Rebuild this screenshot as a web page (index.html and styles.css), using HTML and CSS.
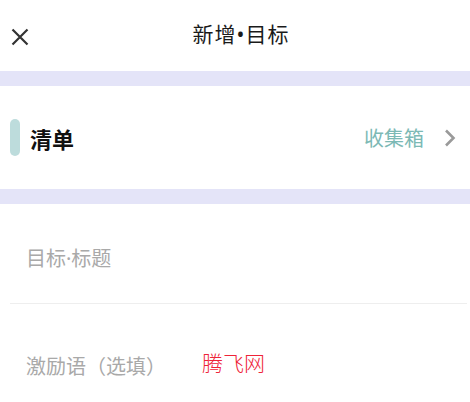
FILE: index.html
```html
<!DOCTYPE html>
<html lang="zh-CN">
<head>
  <meta charset="UTF-8" />
  <meta name="viewport" content="width=device-width, initial-scale=1.0" />
  <title>新增目标</title>
  <link rel="stylesheet" href="styles.css">
</head>
<body>

  <!-- 顶部栏 -->
  <div class="header">
    <svg class="close" width="18" height="18" viewBox="0 0 18 18">
      <path d="M1.5 1.5 L16.5 16.5 M16.5 1.5 L1.5 16.5" stroke="#333" stroke-width="2.2" fill="none" />
    </svg>
    <div class="title">新增•目标</div>
  </div>

  <div class="gap"></div>

  <!-- 清单 -->
  <div class="list-row">
    <span class="bar"></span>
    <span class="list-name">清单</span>
    <span class="list-value">收集箱</span>
    <svg class="arrow" width="12" height="18" viewBox="0 0 12 18">
      <path d="M2 1.5 L9.5 9 L2 16.5" stroke="#9a9a9a" stroke-width="2.6" fill="none" />
    </svg>
  </div>

  <div class="gap"></div>

  <!-- 输入 -->
  <div class="form">
    <input class="field field-title" type="text" placeholder="目标·标题">
    <div class="divider"></div>
    <input class="field field-motto" type="text" placeholder="激励语（选填）">
    <div class="watermark">腾飞网</div>
  </div>

</body>
</html>
```

FILE: styles.css
```css
body {
  margin: 0;
  background: #fff;
  font-family: "Noto Sans CJK SC", "Noto Sans", sans-serif;
  color: #222;
}

.header {
  display: flex;
  align-items: center;
  height: 71px;
  padding-left: 11px;
}

.close {
  margin-top: 3px;
  flex-shrink: 0;
}

.title {
  flex: 1;
  text-align: center;
  font-family: "Noto Sans", "Noto Sans CJK SC", sans-serif;
  font-size: 21px;
  letter-spacing: 1px;
  line-height: 30px;
  margin-right: 17px;
  margin-top: -3px;
  color: #1a1a1a;
}

.gap {
  height: 15px;
  background: #e4e4f8;
}

.list-row {
  display: flex;
  align-items: center;
  height: 103px;
  padding: 0 14px 0 10px;
}

.bar {
  width: 10px;
  height: 37px;
  border-radius: 5px;
  background: #bddcdc;
}

.list-name {
  margin-left: 10px;
  font-size: 22px;
  font-weight: bold;
  color: #111;
  flex: 1;
}

.list-value {
  font-size: 20px;
  color: #7cb9b5;
  margin-right: 20px;
}

.form {
  position: relative;
  padding-top: 40px;
}

.field {
  display: block;
  box-sizing: border-box;
  width: 100%;
  height: 30px;
  padding: 0 26px;
  border: none;
  outline: none;
  background: transparent;
  font-family: "Noto Sans", "Noto Sans CJK SC", sans-serif;
  font-size: 20px;
  line-height: 30px;
  color: #333;
}

.field::placeholder {
  color: #a9a9a9;
}

.field-title {
  margin-bottom: 29px;
}

.field-motto {
  margin-top: 48px;
}

.divider {
  height: 1px;
  margin: 0 3px 0 10px;
  background: #eeeeee;
}

.watermark {
  position: absolute;
  left: 202px;
  top: 148px;
  font-size: 21px;
  line-height: 20px;
  font-weight: 300;
  color: #ee2438;
}
```
